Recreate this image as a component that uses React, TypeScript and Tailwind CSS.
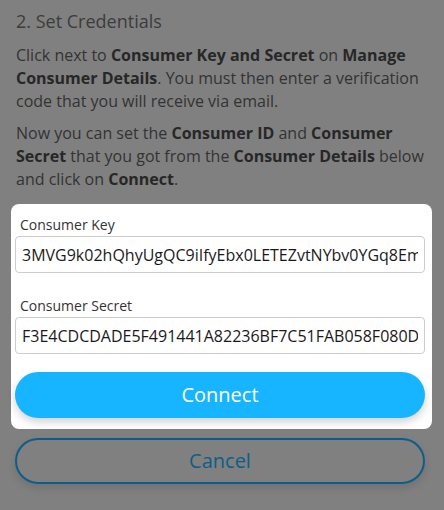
export default function App() {
  return (
    <div className="min-h-[510px] w-[444px] bg-[#808080] font-['Open_Sans',sans-serif] text-[#333333]">
      <div className="px-4 pt-[8px]">
        <h2 className="text-[18px] leading-[26px] text-[#3c3c3c]">2. Set Credentials</h2>
        <p className="mt-[10px] text-[16px] leading-[23px]">
          Click next to <b className="font-bold text-[#272727]">Consumer Key and Secret</b> on{' '}
          <b className="font-bold text-[#272727]">Manage Consumer Details</b>. You must then enter a verification
          code that you will receive via email.
        </p>
        <p className="mt-[9px] text-[16px] leading-[23px]">
          Now you can set the <b className="font-bold text-[#272727]">Consumer ID</b> and{' '}
          <b className="font-bold text-[#272727]">Consumer Secret</b> that you got from the{' '}
          <b className="font-bold text-[#272727]">Consumer Details</b> below and click on{' '}
          <b className="font-bold text-[#272727]">Connect</b>.
        </p>
      </div>

      <div className="ml-[11px] mt-[13px] w-[421px] rounded-[8px] bg-white pb-[11px] pl-[4px] pr-[7px] pt-[11px]">
        <label className="block pl-[5px] text-[14px] leading-[20px] text-[#333]">Consumer Key</label>
        <div className="mt-[1px] h-[37px] overflow-hidden rounded-[4px] border border-[#cccccc] bg-white">
          <input
            readOnly
            value="3MVG9k02hQhyUgQC9iIfyEbx0LETEZvtNYbv0YGq8Em"
            className="h-full w-full bg-transparent px-[6px] text-[16px] text-[#1a1a1a] outline-none"
          />
        </div>

        <label className="mt-[23px] block pl-[5px] text-[14px] leading-[20px] text-[#333]">Consumer Secret</label>
        <div className="mt-[1px] h-[37px] overflow-hidden rounded-[4px] border border-[#cccccc] bg-white">
          <input
            readOnly
            value="F3E4CDCDADE5F491441A82236BF7C51FAB058F080D"
            className="h-full w-full bg-transparent px-[6px] text-[16px] text-[#1a1a1a] outline-none"
          />
        </div>

        <button className="mt-[18px] flex h-[46px] w-full items-center justify-center rounded-full bg-[#17b4ff] text-[20px] text-white shadow-[0_4px_8px_rgba(0,0,0,0.18)]">
          Connect
        </button>
      </div>

      <div className="pl-[15px] pr-[19px] pt-[9px]">
        <button className="flex h-[46px] w-full items-center justify-center rounded-full border-2 border-[#0c5e89] text-[20px] text-[#0d5e88] shadow-[0_4px_8px_rgba(0,0,0,0.12)]">
          Cancel
        </button>
      </div>
    </div>
  );
}
